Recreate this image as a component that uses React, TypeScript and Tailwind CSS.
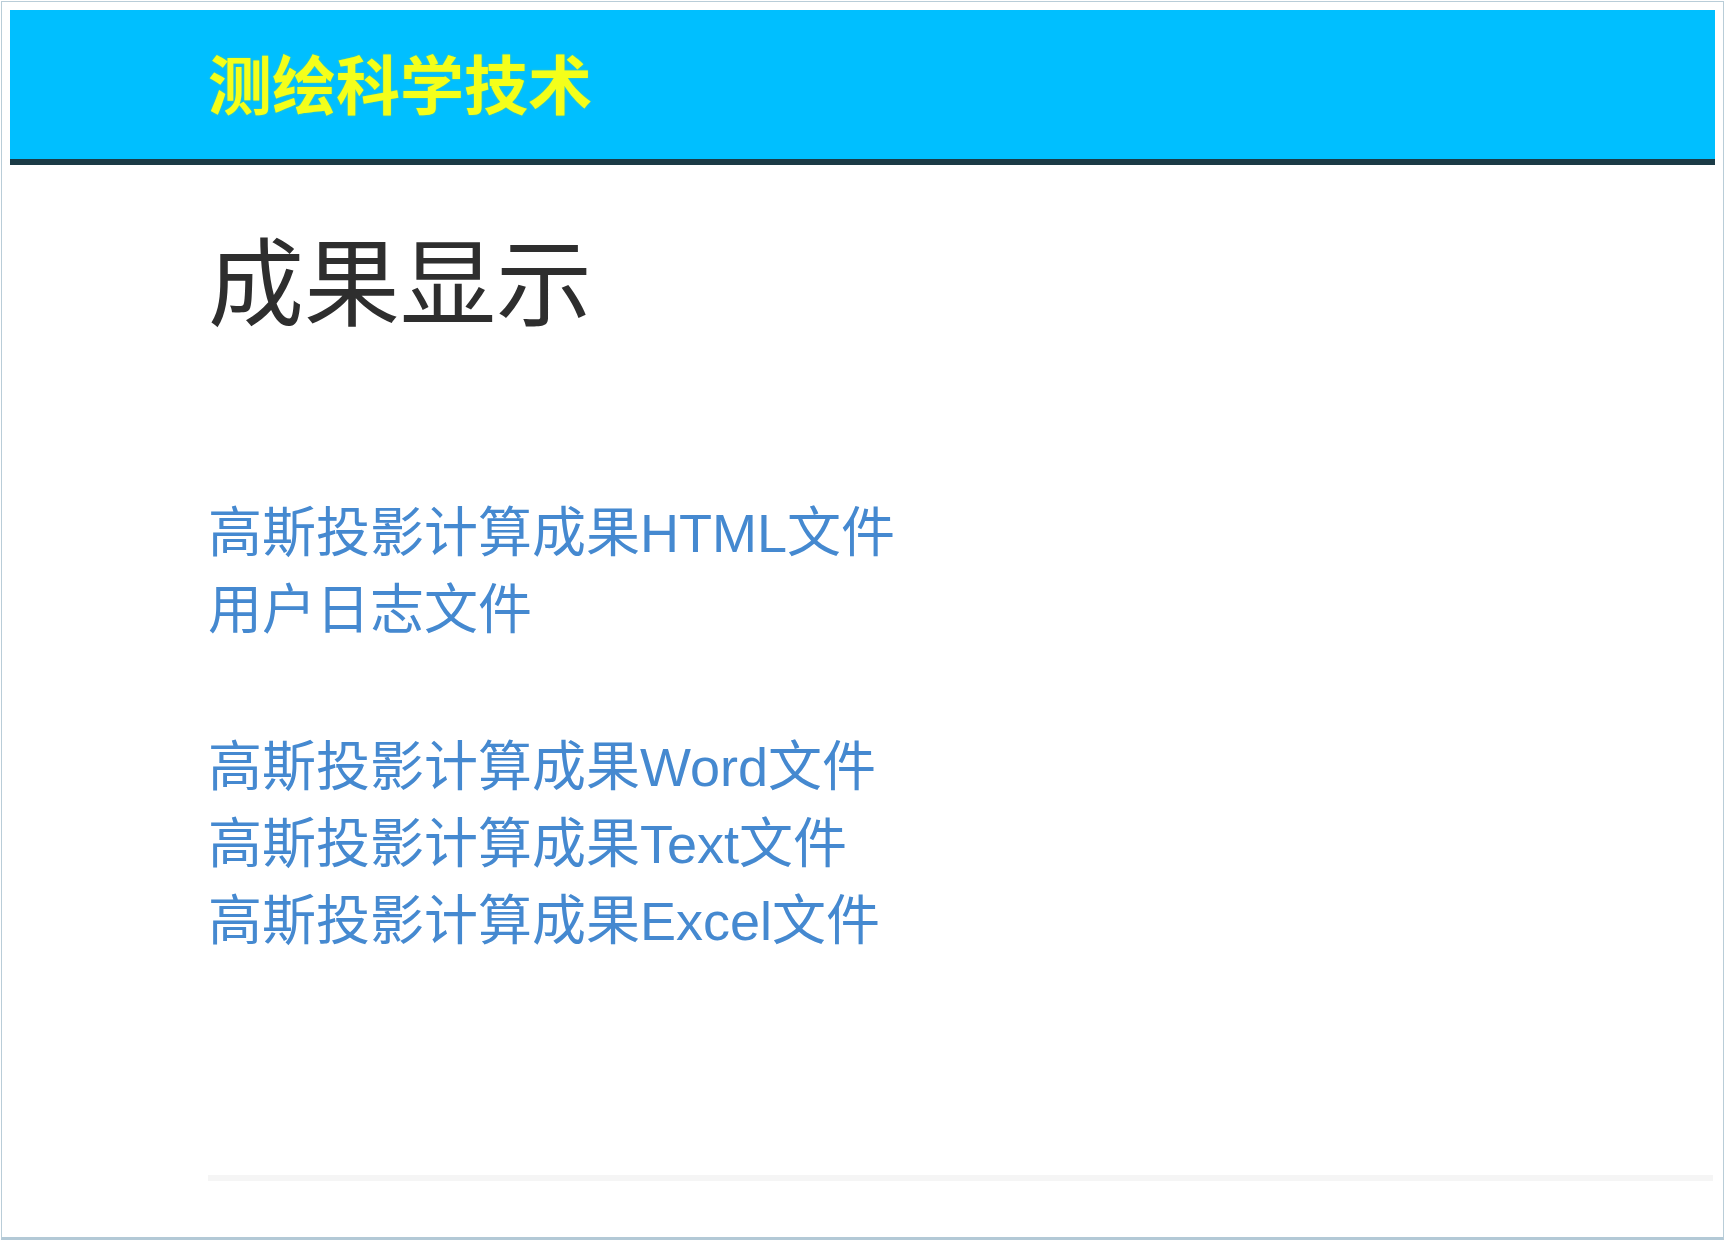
const links = [
  "高斯投影计算成果HTML文件",
  "用户日志文件",
  null,
  "高斯投影计算成果Word文件",
  "高斯投影计算成果Text文件",
  "高斯投影计算成果Excel文件",
]

export default function App() {
  return (
    <div className="w-[1725px] h-[1241px] bg-white p-[1px]">
      <div className="h-full border border-[#b9cdd8] border-b-[3px] border-b-[#b3c9d6] flex flex-col">
        <header className="mx-[8px] mt-[8px] h-[155px] bg-[#00bfff] border-b-[6px] border-[#1b3b46] flex items-center pl-[198px] pb-[8px]">
          <h1 className="text-[64px] font-bold leading-none text-[#f4ff1a] font-['Noto_Sans_CJK_SC',sans-serif] [text-shadow:0_0_2px_rgba(200,220,0,0.6)]">
            测绘科学技术
          </h1>
        </header>

        <main className="flex-1 pl-[206px] flex flex-col">
          <h2 className="mt-[64px] text-[96px] leading-none text-[#2e2e2e] font-['Noto_Sans_CJK_SC',sans-serif]">
            成果显示
          </h2>

          <ul className="mt-[169px] flex flex-col">
            {links.map((item, i) =>
              item ? (
                <li key={i} className="h-[77px] flex items-center">
                  <a
                    href="#"
                    className="text-[54px] leading-none text-[#4589d0] font-['Liberation_Sans','Noto_Sans_CJK_SC',sans-serif]"
                  >
                    {item}
                  </a>
                </li>
              ) : (
                <li key={i} className="h-[80px]" />
              ),
            )}
          </ul>

          <div className="mt-auto mb-[56px] mr-[10px] h-[6px] bg-[#f5f5f5]" />
        </main>
      </div>
    </div>
  )
}
